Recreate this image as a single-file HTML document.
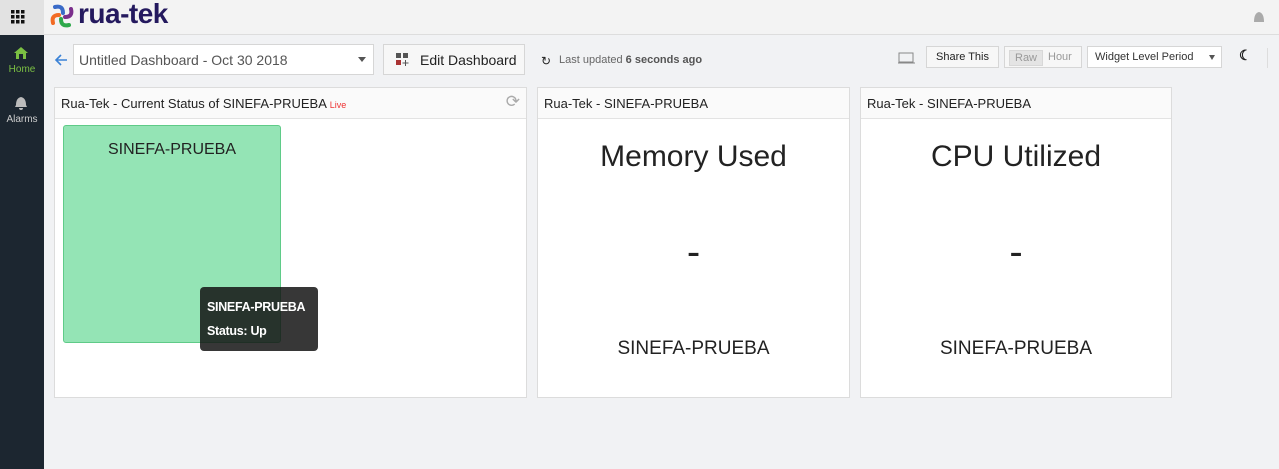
<!DOCTYPE html>
<html><head><style>
*{box-sizing:border-box;margin:0;padding:0}
body{width:1279px;height:469px;background:#f1f2f4;font-family:"Liberation Sans",sans-serif;position:relative;overflow:hidden;color:#222}
.abs{position:absolute}
.top{left:0;top:0;width:1279px;height:35px;background:#f3f3f3;border-bottom:1px solid #ddd}
.side{left:0;top:35px;width:44px;height:434px;background:#1c2630}
.panel{background:#fff;border:1px solid #dcdcdc}
.ph{height:31px;border-bottom:1px solid #e3e3e3;font-size:13px;padding:8px 6px;background:#fafafa;white-space:nowrap}
.btn{background:#f7f7f7;border:1px solid #d6d6d6}
</style></head><body>
<div class="abs top"></div>
<div class="abs" style="left:0;top:0;width:44px;height:35px;background:#e2e2e2"></div>
<svg class="abs" style="left:11px;top:10px" width="14" height="14"><g fill="#111"><rect x="0" y="0" width="3.5" height="3.5"/><rect x="5" y="0" width="3.5" height="3.5"/><rect x="10" y="0" width="3.5" height="3.5"/><rect x="0" y="5" width="3.5" height="3.5"/><rect x="5" y="5" width="3.5" height="3.5"/><rect x="10" y="5" width="3.5" height="3.5"/><rect x="0" y="10" width="3.5" height="3.5"/><rect x="5" y="10" width="3.5" height="3.5"/><rect x="10" y="10" width="3.5" height="3.5"/></g></svg>
<svg class="abs" style="left:49px;top:3px" width="26" height="26"><g stroke-width="4" fill="none" stroke-linecap="round"><path d="M6 4 Q14 2 14 10" stroke="#3a6bc8"/><path d="M22 6 Q24 14 16 14" stroke="#7b2f8c"/><path d="M20 22 Q12 24 12 16" stroke="#2da84a"/><path d="M4 20 Q2 12 10 12" stroke="#f26b24"/></g></svg>
<div class="abs" style="left:78px;top:-2px;font-size:28px;font-weight:bold;color:#24195e;letter-spacing:-0.5px">rua-tek</div>
<svg class="abs" style="left:1252px;top:10px" width="14" height="15"><path d="M2 12 Q2 3 7 2 Q12 3 12 12Z" fill="#aaa"/></svg>
<div class="abs side"></div>
<svg class="abs" style="left:13px;top:46px" width="16" height="14"><path d="M8 1 L15 7 L13 7 L13 13 L3 13 L3 7 L1 7Z" fill="#7bc043"/><rect x="6" y="8" width="4" height="5" fill="#1c2630"/></svg>
<div class="abs" style="left:0;top:64px;width:44px;text-align:center;font-size:10px;color:#7bc043">Home</div>
<svg class="abs" style="left:14px;top:96px" width="14" height="14"><path d="M7 1 Q12 2 12 9 L13 11 L1 11 L2 9 Q2 2 7 1Z M5 12 h4 a2 2 0 0 1 -4 0Z" fill="#bbb"/></svg>
<div class="abs" style="left:0;top:114px;width:44px;text-align:center;font-size:10px;color:#ccc">Alarms</div>
<svg class="abs" style="left:53px;top:53px" width="16" height="14"><path d="M14 7 H3 M8 2 L3 7 L8 12" stroke="#3b82d6" stroke-width="1.6" fill="none"/></svg>
<div class="abs" style="left:73px;top:44px;width:301px;height:31px;background:#fff;border:1px solid #d6d6d6;font-size:14px;color:#555;padding:7px 5px;white-space:nowrap">Untitled Dashboard - Oct 30 2018</div>
<div class="abs" style="left:358px;top:57px;border-left:4px solid transparent;border-right:4px solid transparent;border-top:5px solid #555"></div>
<div class="abs btn" style="left:383px;top:44px;width:142px;height:31px;font-size:14px;padding:7px 0 0 36px">Edit Dashboard</div>
<svg class="abs" style="left:396px;top:53px" width="14" height="14"><rect x="0" y="0" width="5" height="5" fill="#555"/><rect x="7" y="0" width="5" height="5" fill="#555"/><rect x="0" y="7" width="5" height="5" fill="#a33"/><path d="M9.5 7 v6 M6.5 10 h6" stroke="#555"/></svg>
<div class="abs" style="left:541px;top:54px;font-size:12px;color:#222">↻</div>
<div class="abs" style="left:559px;top:54px;font-size:11px;color:#666">Last updated <b style="color:#555">6 seconds ago</b></div>
<svg class="abs" style="left:898px;top:51px" width="18" height="14"><rect x="1" y="2" width="14" height="9" fill="none" stroke="#888"/><path d="M0 12 h17" stroke="#888"/></svg>
<div class="abs btn" style="left:926px;top:46px;width:73px;height:22px;font-size:11px;padding:4px 0;text-align:center">Share This</div>
<div class="abs btn" style="left:1004px;top:46px;width:78px;height:22px;font-size:11px;color:#999"><span style="position:absolute;left:4px;top:3px;background:#e4e4e4;border:1px solid #d8d8d8;padding:1px 5px">Raw</span><span style="position:absolute;left:43px;top:4px">Hour</span></div>
<div class="abs" style="left:1087px;top:46px;width:135px;height:22px;background:#fff;border:1px solid #d6d6d6;font-size:11px;padding:4px 7px;color:#333">Widget Level Period</div>
<div class="abs" style="left:1209px;top:55px;border-left:3px solid transparent;border-right:3px solid transparent;border-top:5px solid #555"></div>
<div class="abs" style="left:1239px;top:47px;font-size:14px;font-weight:bold">☾</div>
<div class="abs" style="left:1267px;top:48px;width:1px;height:20px;background:#ddd"></div>

<div class="abs panel" style="left:54px;top:87px;width:473px;height:311px">
<div class="ph">Rua-Tek - Current Status of SINEFA-PRUEBA <span style="color:#e33;font-size:9px">Live</span></div>
<div class="abs" style="right:6px;top:4px;font-size:17px;color:#aaa">⟳</div>
<div class="abs" style="left:8px;top:37px;width:218px;height:218px;background:#94e4b5;border:1px solid #5fcb88;border-radius:3px;text-align:center;font-size:16px;padding-top:15px">SINEFA-PRUEBA</div>
<div class="abs" style="left:145px;top:199px;width:118px;height:64px;background:rgba(20,20,20,.85);border-radius:4px;color:#fff;font-size:12.5px;font-weight:bold;padding:8px 7px;line-height:24px;white-space:nowrap;letter-spacing:-0.3px">SINEFA-PRUEBA<br>Status: Up</div>
</div>
<div class="abs panel" style="left:537px;top:87px;width:313px;height:311px">
<div class="ph">Rua-Tek - SINEFA-PRUEBA</div>
<div class="abs" style="left:0;width:100%;top:52px;text-align:center;font-size:30px">Memory Used</div>
<div class="abs" style="left:0;width:100%;top:142px;text-align:center;font-size:40px">-</div>
<div class="abs" style="left:0;width:100%;top:250px;text-align:center;font-size:19px">SINEFA-PRUEBA</div>
</div>
<div class="abs panel" style="left:860px;top:87px;width:312px;height:311px">
<div class="ph">Rua-Tek - SINEFA-PRUEBA</div>
<div class="abs" style="left:0;width:100%;top:52px;text-align:center;font-size:30px">CPU Utilized</div>
<div class="abs" style="left:0;width:100%;top:142px;text-align:center;font-size:40px">-</div>
<div class="abs" style="left:0;width:100%;top:250px;text-align:center;font-size:19px">SINEFA-PRUEBA</div>
</div>
</body></html>
